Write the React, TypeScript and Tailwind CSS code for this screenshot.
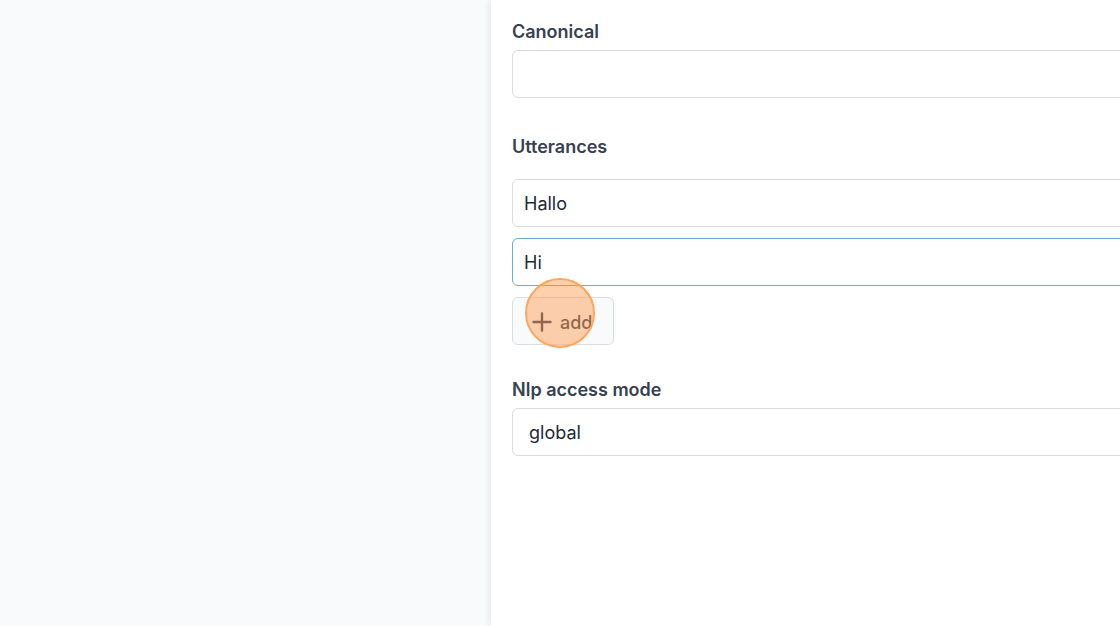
import React from "react";

export default function App() {
  return (
    <div className="w-[1120px] h-[626px] overflow-hidden flex bg-[#f9fafb]" style={{ fontFamily: "Inter, 'Noto Sans', sans-serif" }}>
      <div className="w-[491px] shrink-0" />
      <div className="flex-1 bg-white shadow-[-2px_0_6px_rgba(0,0,0,0.08)] pl-[21px] pt-[18px] relative">
        <div className="w-[700px] flex flex-col">
          <label className="text-[18px] leading-[28px] font-semibold text-[#374151]">Canonical</label>
          <div className="mt-[4px] h-[48px] rounded-[6px] border border-[#dcdcdc] bg-white" />

          <label className="mt-[35px] text-[18px] leading-[28px] font-semibold text-[#374151]">Utterances</label>
          <div className="mt-[18px] h-[48px] rounded-[6px] border border-[#dcdcdc] bg-white flex items-center pl-[11px] text-[18px] text-[#1f2937]">Hallo</div>
          <div className="mt-[11px] h-[48px] rounded-[6px] border border-[#6aaed6] bg-white flex items-center pl-[11px] text-[18px] text-[#1f2937]">Hi</div>
          <div className="mt-[11px] relative w-[102px] h-[48px]">
            <button className="w-[102px] h-[48px] rounded-[6px] border border-[#dcdcdc] bg-[#f9fafb] flex items-center pl-[19px] pt-[2px] gap-[8px] text-[18px] font-medium text-[#374151]">
              <svg width="20" height="20" viewBox="0 0 20 20" fill="none" stroke="currentColor" strokeWidth="2.4" strokeLinecap="round">
                <path d="M10 1.5v17M1.5 10h17" />
              </svg>
              <span>add</span>
            </button>
            <div className="absolute left-[13px] top-[-19px] w-[70px] h-[70px] rounded-full bg-[rgba(253,150,70,0.45)] border-2 border-[#fca660] pointer-events-none" />
          </div>

          <label className="mt-[31px] text-[18px] leading-[28px] font-semibold text-[#374151]">Nlp access mode</label>
          <div className="mt-[4px] h-[48px] rounded-[6px] border border-[#dcdcdc] bg-white flex items-center pl-[16px] text-[18px] text-[#1f2937]">global</div>
        </div>
      </div>
    </div>
  );
}
